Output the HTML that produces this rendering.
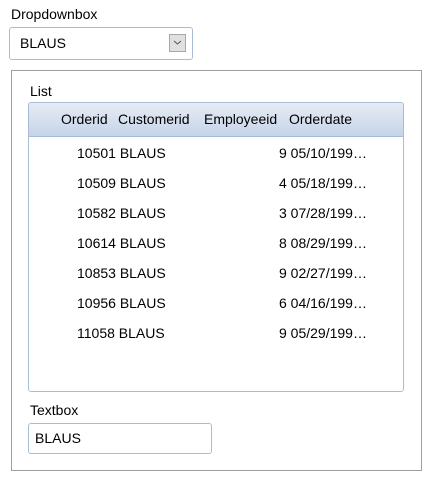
<!DOCTYPE html>
<html><head><style>
body{margin:0;width:436px;height:489px;background:#fff;font-family:"Liberation Sans",Arial,sans-serif;font-size:14px;color:#000;position:relative;overflow:hidden}
.a{position:absolute;white-space:nowrap}
</style></head><body>
<div class="a" style="left:11px;top:6px">Dropdownbox</div>
<div class="a" style="left:9px;top:27px;border:1px solid #a9bcd6;border-radius:3px;box-sizing:border-box;width:184px;height:33px"></div>
<div class="a" style="left:20px;top:35px">BLAUS</div>
<div class="a" style="left:169px;top:34px;width:17px;height:18px;box-sizing:border-box;border:1px solid #a8a8a8;background:#e0e0e0"></div>
<svg class="a" style="left:173px;top:39px" width="9" height="7"><path d="M1 2 L4.5 5 L8 2" stroke="#555" fill="none" stroke-width="1"/></svg>
<div class="a" style="left:11px;top:70px;width:411px;height:401px;box-sizing:border-box;border:1px solid #a0a0a0"></div>
<div class="a" style="left:30px;top:83px">List</div>
<div class="a" style="left:28px;top:102px;width:376px;height:290px;box-sizing:border-box;border:1px solid #a9bcd6;border-radius:3px;overflow:hidden">
<div style="height:33px;border-bottom:1px solid #a9bcd6;background:linear-gradient(#e6ecf5,#c6d4e8)"></div>
</div>
<div class="a" style="left:61px;top:111px">Orderid</div>
<div class="a" style="left:118px;top:111px">Customerid</div>
<div class="a" style="left:204px;top:111px">Employeeid</div>
<div class="a" style="left:289px;top:111px">Orderdate</div>
<div class="a" style="left:77px;top:138px;line-height:30px">10501 BLAUS<br>10509 BLAUS<br>10582 BLAUS<br>10614 BLAUS<br>10853 BLAUS<br>10956 BLAUS<br>11058 BLAUS</div>
<div class="a" style="left:279px;top:138px;line-height:30px">9 05/10/199…<br>4 05/18/199…<br>3 07/28/199…<br>8 08/29/199…<br>9 02/27/199…<br>6 04/16/199…<br>9 05/29/199…</div>
<div class="a" style="left:30px;top:402px">Textbox</div>
<div class="a" style="left:28px;top:423px;width:184px;height:31px;box-sizing:border-box;border:1px solid #a9bcd6;border-radius:3px"></div>
<div class="a" style="left:35px;top:430px">BLAUS</div>
</body></html>
